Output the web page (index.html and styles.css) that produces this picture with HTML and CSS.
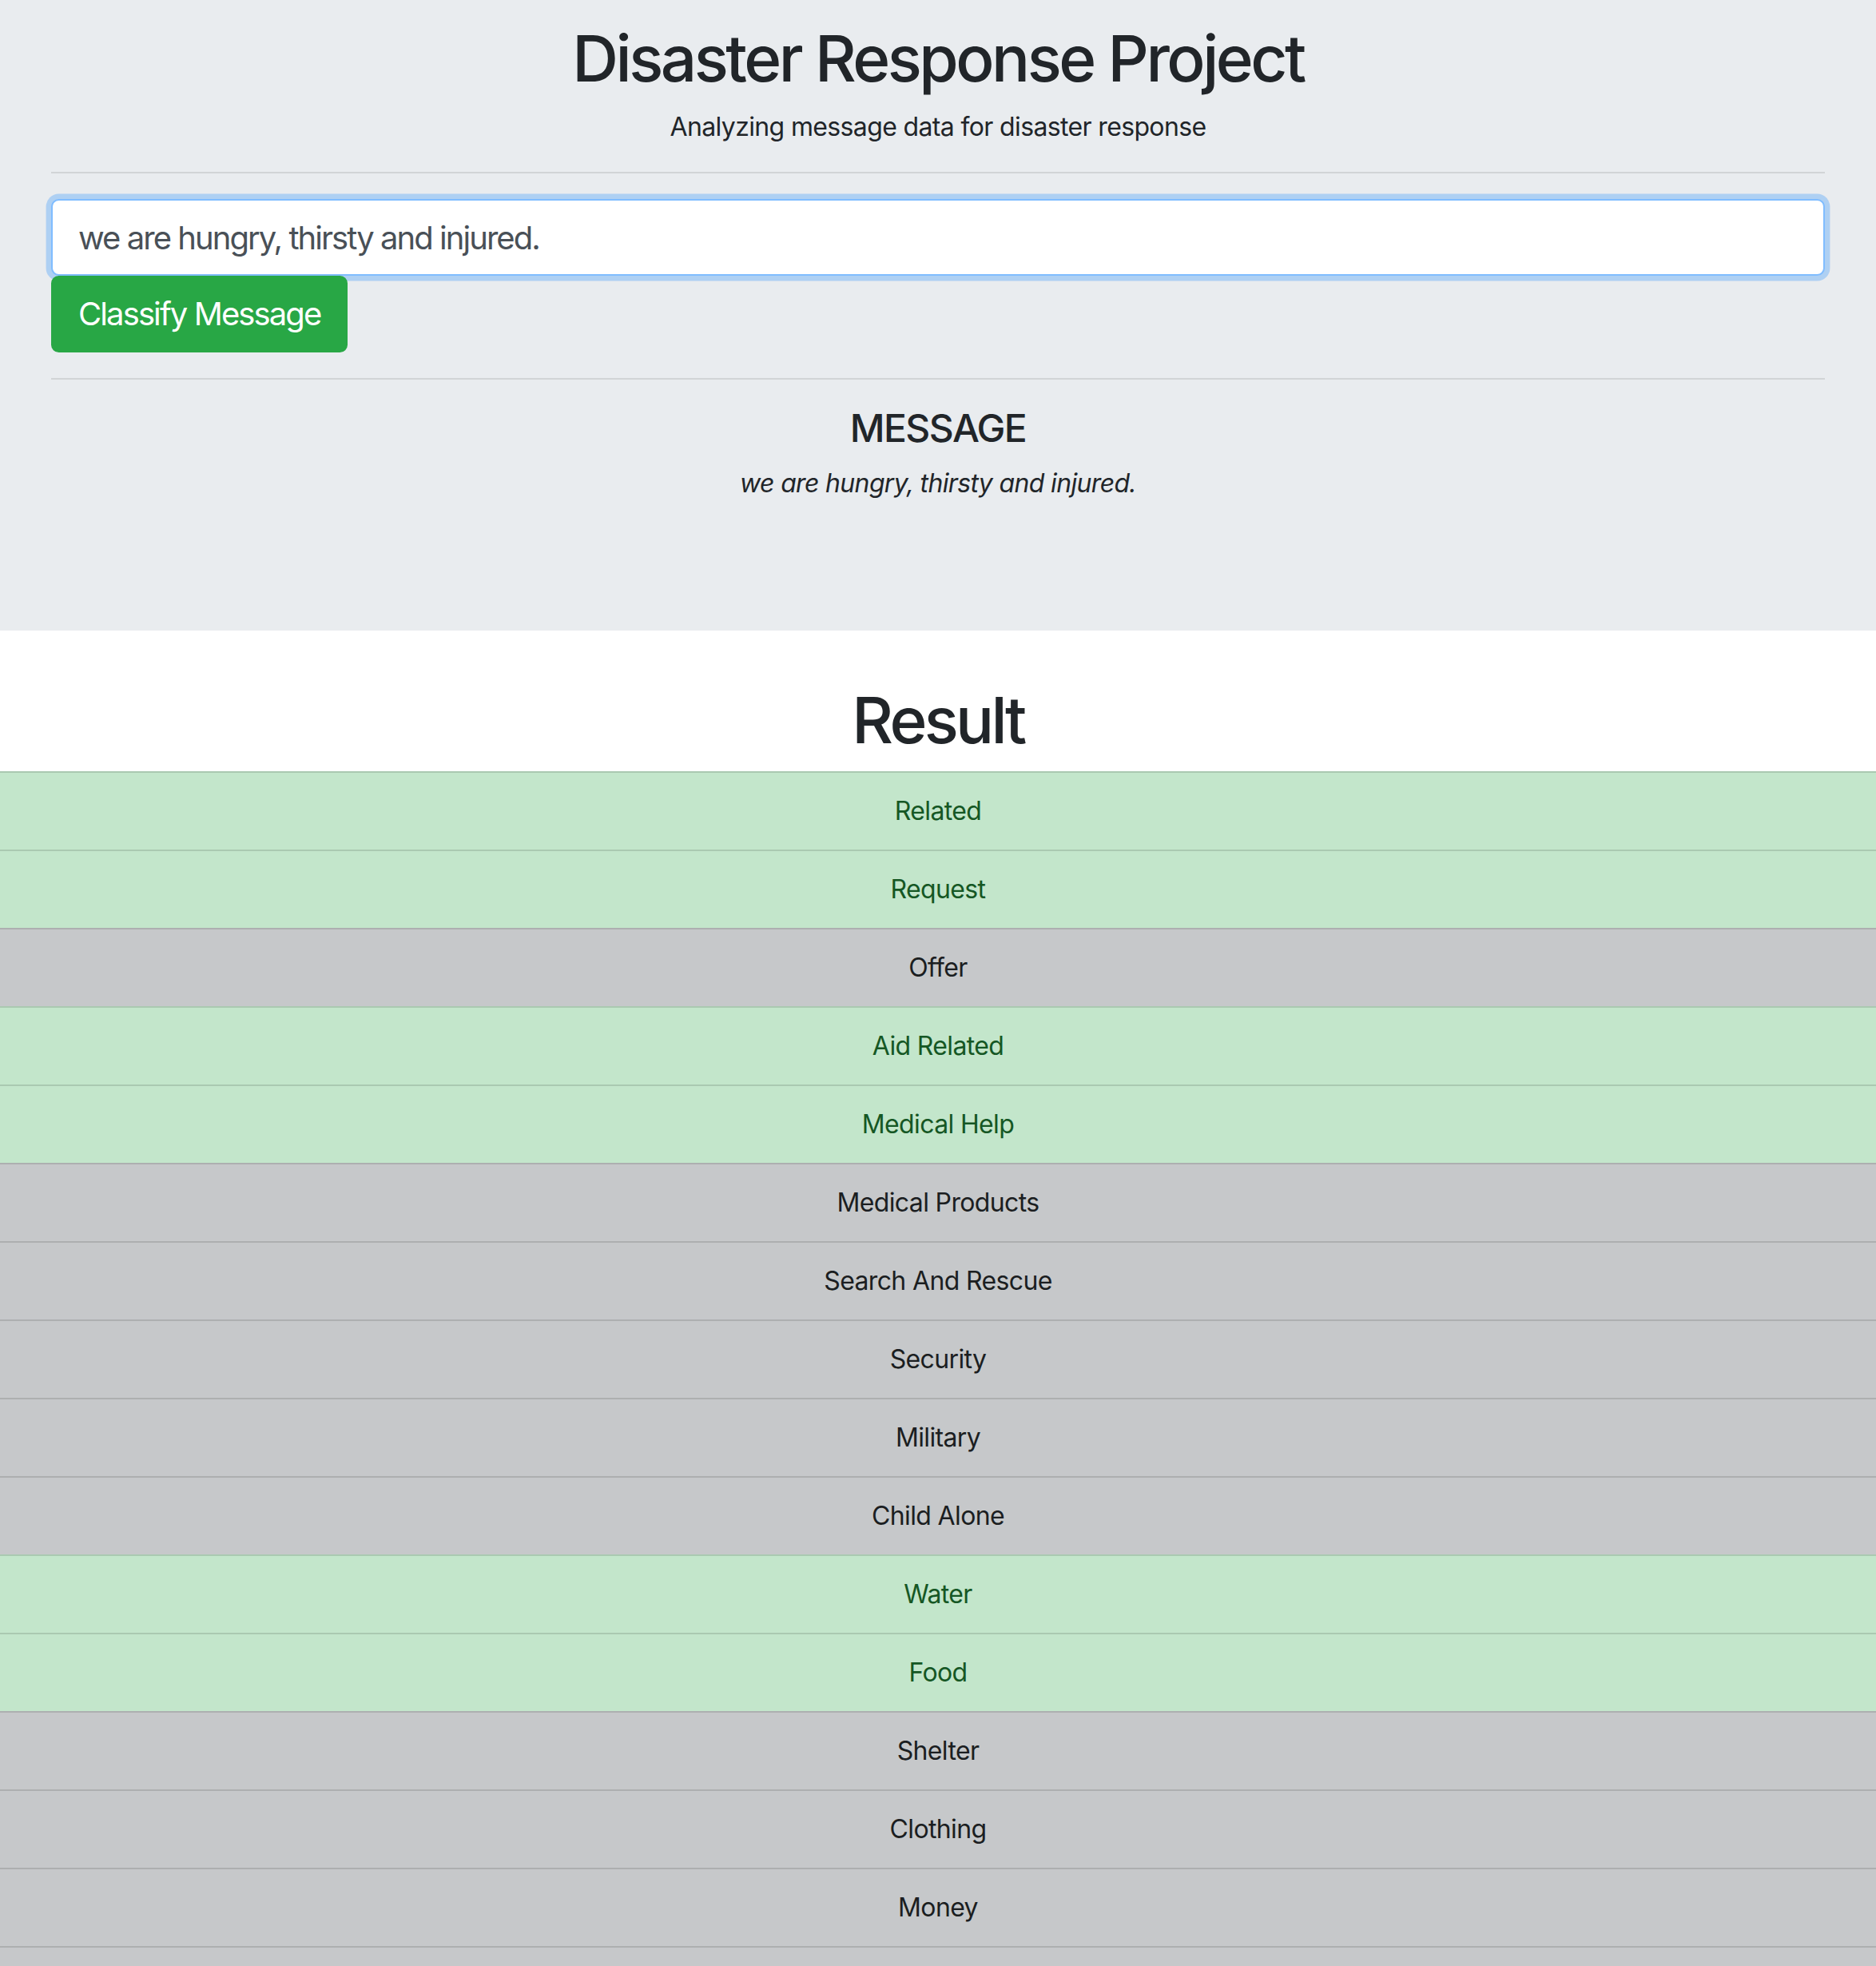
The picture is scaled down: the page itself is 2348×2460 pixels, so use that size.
FILE: index.html
```html
<!DOCTYPE html>
<html lang="en">
<head>
<meta charset="utf-8">
<title>Disaster Response Project</title>
<link rel="stylesheet" href="styles.css">
</head>
<body>
<div class="jumbotron">
  <h1 class="title">Disaster Response Project</h1>
  <p class="subtitle">Analyzing message data for disaster response</p>
  <hr class="divider">
  <form class="classify-form">
    <input class="query" type="text" name="query" value="we are hungry, thirsty and injured.">
    <button class="btn-classify" type="button">Classify Message</button>
  </form>
  <hr class="divider">
  <div class="message">
    <h4 class="message-title">MESSAGE</h4>
    <p class="message-text">we are hungry, thirsty and injured.</p>
  </div>
</div>

<h1 class="result-title">Result</h1>
<ul class="results">
  <li class="item item-yes">Related</li>
  <li class="item item-yes">Request</li>
  <li class="item item-no">Offer</li>
  <li class="item item-yes">Aid Related</li>
  <li class="item item-yes">Medical Help</li>
  <li class="item item-no">Medical Products</li>
  <li class="item item-no">Search And Rescue</li>
  <li class="item item-no">Security</li>
  <li class="item item-no">Military</li>
  <li class="item item-no">Child Alone</li>
  <li class="item item-yes">Water</li>
  <li class="item item-yes">Food</li>
  <li class="item item-no">Shelter</li>
  <li class="item item-no">Clothing</li>
  <li class="item item-no">Money</li>
  <li class="item item-no">Missing People</li>
</ul>
</body>
</html>
```

FILE: styles.css
```css
html, body {
  margin: 0;
  padding: 0;
}

body {
  font-family: Inter, "Noto Sans", "Liberation Sans", sans-serif;
  font-size: 32px;
  line-height: 1.5;
  letter-spacing: -0.64px;
  color: #212529;
  background: #ffffff;
}

.jumbotron {
  background: #e9ecef;
  padding: 25px 64px 128px;
  margin-bottom: 64px;
  text-align: center;
}

.title {
  margin: 0 0 14px;
  font-size: 80px;
  font-weight: 500;
  line-height: 1.2;
  letter-spacing: -3.5px;
}

.subtitle {
  margin: 0 0 32px;
}

.divider {
  margin: 32px 0;
  border: 0;
  border-top: 2px solid rgba(0, 0, 0, 0.1);
  height: 0;
}

.classify-form {
  display: flex;
  flex-direction: column;
  align-items: flex-start;
  margin: 0;
}

.query {
  box-sizing: border-box;
  width: 100%;
  height: 96px;
  margin: 0;
  padding: 16px 32px;
  font-family: inherit;
  font-size: 40px;
  line-height: 1.5;
  letter-spacing: -1.95px;
  color: #495057;
  background: #ffffff;
  border: 2px solid #80bdff;
  border-radius: 9.6px;
  box-shadow: 0 0 0 6.4px rgba(0, 123, 255, 0.25);
  outline: none;
}

.btn-classify {
  box-sizing: border-box;
  margin: 0;
  padding: 16px 32px;
  font-family: inherit;
  font-size: 40px;
  font-weight: 400;
  line-height: 1.5;
  letter-spacing: -1.9px;
  color: #ffffff;
  background: #28a745;
  border: 2px solid #28a745;
  border-radius: 9.6px;
  cursor: pointer;
}

.message-title {
  margin: 0 0 16px;
  font-size: 48px;
  font-weight: 500;
  line-height: 1.2;
  letter-spacing: -1.6px;
}

.message-text {
  margin: 0 0 32px;
  font-style: italic;
  letter-spacing: -0.66px;
}

.result-title {
  margin: 0 0 16px;
  font-size: 80px;
  font-weight: 500;
  line-height: 1.2;
  letter-spacing: -3.7px;
  text-align: center;
}

.results {
  list-style: none;
  margin: 0;
  padding: 0;
}

.item {
  padding: 24px 40px;
  text-align: center;
  border-top: 2px solid rgba(0, 0, 0, 0.125);
}

.item:last-child {
  border-bottom: 2px solid rgba(0, 0, 0, 0.125);
}

.item-yes {
  background: #c3e6cb;
  color: #155724;
}

.item-no {
  background: #c6c8ca;
  color: #1b1e21;
}
```
